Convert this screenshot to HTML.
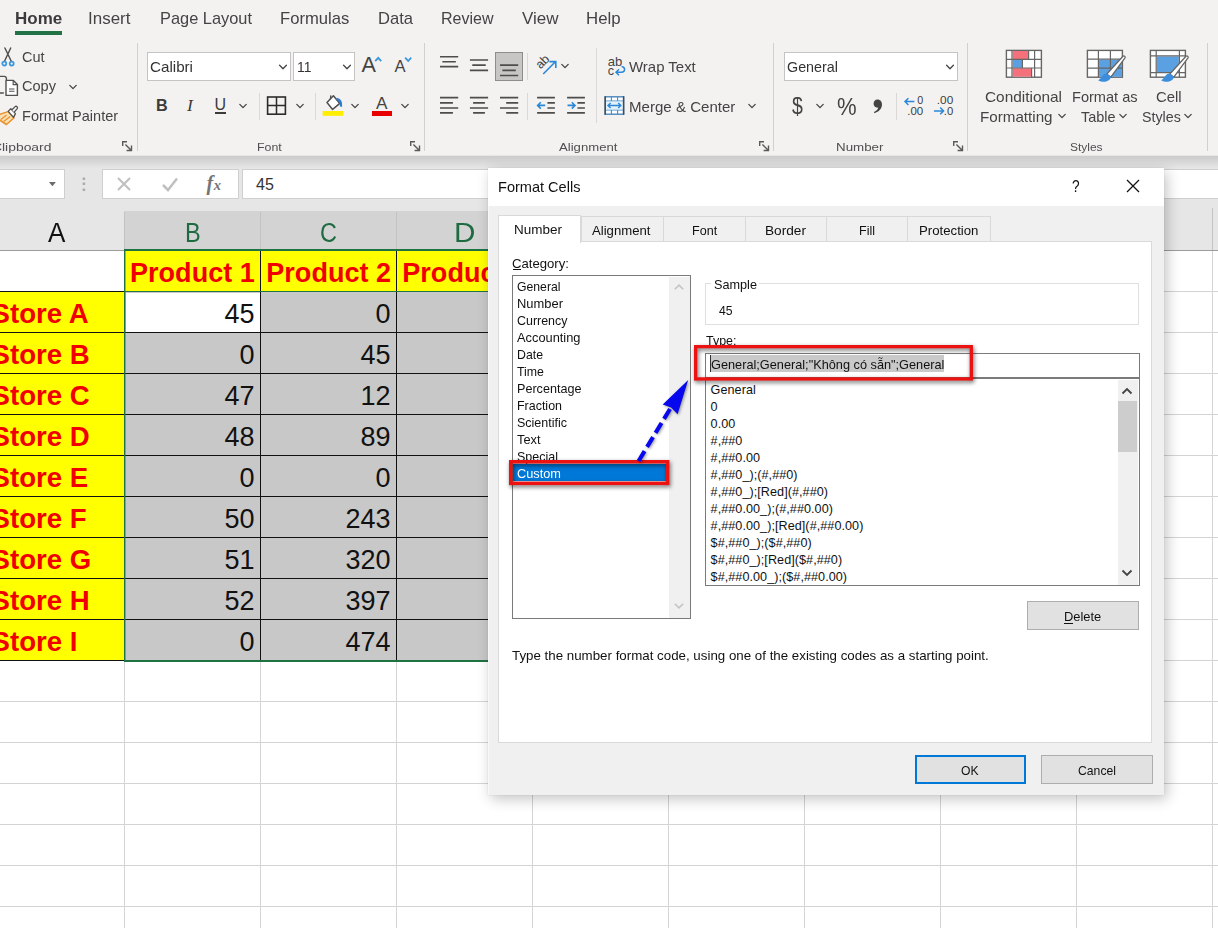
<!DOCTYPE html>
<html lang="en"><head><meta charset="utf-8"><title>Format Cells</title>
<style>
html,body{margin:0;padding:0;}
body{width:1218px;height:928px;overflow:hidden;background:#fff;position:relative;
 font-family:"Liberation Sans",sans-serif;}
#root{position:absolute;left:0;top:0;width:1218px;height:928px;overflow:hidden;background:#fff;}
#root div,#root span,#root svg{position:absolute;box-sizing:border-box;}
.t{white-space:pre;}
</style></head><body><div id="root">
<div style="left:0px;top:0px;width:1218px;height:156px;background:#f3f2f1;"></div>
<span class="t" style="left:14.60px;top:9px;line-height:18px;font-size:16.2px;color:#3b3b3b;transform:scaleX(1.0487);transform-origin:0 0;font-weight:700;">Home</span>
<div style="left:14.5px;top:31px;width:47.5px;height:3.6px;background:#217346;"></div>
<span class="t" style="left:88.30px;top:9px;line-height:18px;font-size:16.2px;color:#444;transform:scaleX(1.0490);transform-origin:0 0;">Insert</span>
<span class="t" style="left:159.80px;top:9px;line-height:18px;font-size:16.2px;color:#444;transform:scaleX(1.0113);transform-origin:0 0;">Page Layout</span>
<span class="t" style="left:280.30px;top:9px;line-height:18px;font-size:16.2px;color:#444;transform:scaleX(1.0265);transform-origin:0 0;">Formulas</span>
<span class="t" style="left:377.60px;top:9px;line-height:18px;font-size:16.2px;color:#444;transform:scaleX(1.0228);transform-origin:0 0;">Data</span>
<span class="t" style="left:441.00px;top:9px;line-height:18px;font-size:16.2px;color:#444;transform:scaleX(0.9903);transform-origin:0 0;">Review</span>
<span class="t" style="left:522.00px;top:9px;line-height:18px;font-size:16.2px;color:#444;transform:scaleX(1.0511);transform-origin:0 0;">View</span>
<span class="t" style="left:586.00px;top:9px;line-height:18px;font-size:16.2px;color:#444;transform:scaleX(1.0385);transform-origin:0 0;">Help</span>
<div style="left:136.5px;top:42.5px;width:1px;height:108px;background:#d2d0ce;"></div>
<div style="left:424.4px;top:42.5px;width:1px;height:108px;background:#d2d0ce;"></div>
<div style="left:773.3px;top:42.5px;width:1px;height:108px;background:#d2d0ce;"></div>
<div style="left:967.4px;top:42.5px;width:1px;height:108px;background:#d2d0ce;"></div>
<div style="left:1206.8px;top:42.5px;width:1px;height:108px;background:#d2d0ce;"></div>
<div style="left:258.7px;top:93px;width:1px;height:27px;background:#dad8d6;"></div>
<div style="left:314.7px;top:93px;width:1px;height:27px;background:#dad8d6;"></div>
<div style="left:527.2px;top:53px;width:1px;height:27px;background:#dad8d6;"></div>
<div style="left:527.2px;top:93px;width:1px;height:27px;background:#dad8d6;"></div>
<div style="left:595.5px;top:48px;width:1px;height:75px;background:#dad8d6;"></div>
<div style="left:896.2px;top:93px;width:1px;height:27px;background:#dad8d6;"></div>
<span class="t" style="left:-7.80px;top:140px;line-height:13px;font-size:11.7px;color:#505050;transform:scaleX(1.1881);transform-origin:0 0;">Clipboard</span>
<span class="t" style="left:257.40px;top:140px;line-height:13px;font-size:11.7px;color:#505050;transform:scaleX(1.0593);transform-origin:0 0;">Font</span>
<span class="t" style="left:559.20px;top:140px;line-height:13px;font-size:11.7px;color:#505050;transform:scaleX(1.1244);transform-origin:0 0;">Alignment</span>
<span class="t" style="left:836.30px;top:140px;line-height:13px;font-size:11.7px;color:#505050;transform:scaleX(1.1415);transform-origin:0 0;">Number</span>
<span class="t" style="left:1070.20px;top:140px;line-height:13px;font-size:11.7px;color:#505050;transform:scaleX(1.0232);transform-origin:0 0;">Styles</span>
<svg style="left:121.8px;top:140.6px;" width="11" height="11" viewBox="0 0 11 11"><path d="M0.7 5 L0.7 0.7 L5 0.7" fill="none" stroke="#5a5a5a" stroke-width="1.4"/><path d="M3.4 3.4 L9.2 9.2 M9.5 4.6 L9.5 9.5 L4.6 9.5" fill="none" stroke="#5a5a5a" stroke-width="1.4"/></svg>
<svg style="left:409.6px;top:140.6px;" width="11" height="11" viewBox="0 0 11 11"><path d="M0.7 5 L0.7 0.7 L5 0.7" fill="none" stroke="#5a5a5a" stroke-width="1.4"/><path d="M3.4 3.4 L9.2 9.2 M9.5 4.6 L9.5 9.5 L4.6 9.5" fill="none" stroke="#5a5a5a" stroke-width="1.4"/></svg>
<svg style="left:758.8px;top:140.6px;" width="11" height="11" viewBox="0 0 11 11"><path d="M0.7 5 L0.7 0.7 L5 0.7" fill="none" stroke="#5a5a5a" stroke-width="1.4"/><path d="M3.4 3.4 L9.2 9.2 M9.5 4.6 L9.5 9.5 L4.6 9.5" fill="none" stroke="#5a5a5a" stroke-width="1.4"/></svg>
<svg style="left:952.8px;top:140.6px;" width="11" height="11" viewBox="0 0 11 11"><path d="M0.7 5 L0.7 0.7 L5 0.7" fill="none" stroke="#5a5a5a" stroke-width="1.4"/><path d="M3.4 3.4 L9.2 9.2 M9.5 4.6 L9.5 9.5 L4.6 9.5" fill="none" stroke="#5a5a5a" stroke-width="1.4"/></svg>
<svg style="left:0px;top:46px;" width="16" height="22" viewBox="0 0 16 22"><path d="M4.9 2 L11.3 15.2 M10.7 2 L4.5 15.2" stroke="#505050" stroke-width="1.45" fill="none" stroke-linecap="round"/><circle cx="4.3" cy="17.6" r="2.0" fill="none" stroke="#3a96dd" stroke-width="1.7"/><circle cx="11.7" cy="17.6" r="2.0" fill="none" stroke="#3a96dd" stroke-width="1.7"/></svg>
<span class="t" style="left:22.20px;top:49px;line-height:16px;font-size:14.1px;color:#444;transform:scaleX(1.0300);transform-origin:0 0;">Cut</span>
<svg style="left:0px;top:74px;" width="20" height="24" viewBox="0 0 20 24"><path d="M-2 2.4 L4.2 2.4 Q6.4 2.4 6.4 4.6 L6.4 6 M-2 19 L3.8 19" fill="none" stroke="#505050" stroke-width="1.4"/><path d="M6 6.4 L13.4 6.4 L17.4 10.4 L17.4 21.4 L6 21.4 Z" fill="#fff" stroke="#505050" stroke-width="1.4" stroke-linejoin="round"/><path d="M13.2 6.6 L13.2 10.6 L17.2 10.6" fill="none" stroke="#505050" stroke-width="1.2"/><path d="M9 15 L14.5 15 M9 17.3 L14.5 17.3" stroke="#505050" stroke-width="1.1"/></svg>
<span class="t" style="left:22.20px;top:78px;line-height:16px;font-size:14.1px;color:#444;transform:scaleX(1.0329);transform-origin:0 0;">Copy</span>
<svg style="left:67.4px;top:80.6px;" width="12" height="12" viewBox="0 0 12 12"><path d="M2.8 4.4 L6 7.6 L9.2 4.4" fill="none" stroke="#444" stroke-width="1.3" stroke-linecap="round" stroke-linejoin="round"/></svg>
<svg style="left:0px;top:104px;" width="22" height="24" viewBox="0 0 22 24"><path d="M-1 10.6 L8 7.6 L13.9 14 L6.4 20.5 L-1 15.6 Z" fill="#fbe0b6" stroke="#e8912d" stroke-width="1.5" stroke-linejoin="round"/><path d="M1 15.4 L6.6 11 M3.6 17.6 L10.2 12.6" stroke="#e8912d" stroke-width="1.3" fill="none"/><path d="M8.2 7.4 L10.8 4.8 L15.4 9.6 L13.6 13.4 Z" fill="#fff" stroke="#505050" stroke-width="1.3" stroke-linejoin="round"/><path d="M12 5.8 L15.2 2.6 C16.4 1.6 18.2 3.2 17.2 4.6 L14.2 8.2" fill="#fff" stroke="#505050" stroke-width="1.3" stroke-linejoin="round"/></svg>
<span class="t" style="left:22.20px;top:108px;line-height:16px;font-size:14.1px;color:#444;transform:scaleX(1.0317);transform-origin:0 0;">Format Painter</span>
<div style="left:147px;top:52px;width:144px;height:29px;background:#fff;border:1px solid #c6c4c2;"></div>
<span class="t" style="left:150.20px;top:59px;line-height:16px;font-size:14.1px;color:#333;transform:scaleX(1.0761);transform-origin:0 0;">Calibri</span>
<svg style="left:277px;top:61.2px;" width="12" height="12" viewBox="0 0 12 12"><path d="M2.6 4.3 L6 7.7 L9.4 4.3" fill="none" stroke="#444" stroke-width="1.3" stroke-linecap="round" stroke-linejoin="round"/></svg>
<div style="left:293px;top:52px;width:62px;height:29px;background:#fff;border:1px solid #c6c4c2;"></div>
<span class="t" style="left:296.80px;top:59px;line-height:16px;font-size:14.1px;color:#333;transform:scaleX(0.9838);transform-origin:0 0;">11</span>
<svg style="left:341px;top:61.2px;" width="12" height="12" viewBox="0 0 12 12"><path d="M2.6 4.3 L6 7.7 L9.4 4.3" fill="none" stroke="#444" stroke-width="1.3" stroke-linecap="round" stroke-linejoin="round"/></svg>
<span class="t" style="left:361.60px;top:52px;line-height:25px;font-size:21.6px;color:#444;">A</span>
<svg style="left:374px;top:56.2px;" width="9" height="7" viewBox="0 0 9 7"><path d="M1.2 5.2 L4.2 1.8 L7.2 5.2" fill="none" stroke="#3a96dd" stroke-width="1.8"/></svg>
<span class="t" style="left:394.40px;top:57px;line-height:19px;font-size:16.6px;color:#444;">A</span>
<svg style="left:404px;top:55.6px;" width="9" height="7" viewBox="0 0 9 7"><path d="M1.2 1.6 L4.2 5 L7.2 1.6" fill="none" stroke="#3a96dd" stroke-width="1.8"/></svg>
<span class="t" style="left:156.00px;top:96px;line-height:18px;font-size:16.2px;color:#3b3b3b;font-weight:700;">B</span>
<span class="t" style="left:187.00px;top:95px;line-height:20px;font-size:17.5px;color:#3b3b3b;font-style:italic;font-family:'Liberation Serif',serif;">I</span>
<span class="t" style="left:214.60px;top:96px;line-height:17px;font-size:16px;color:#3b3b3b;">U</span>
<div style="left:214.8px;top:112px;width:11.6px;height:1.5px;background:#3b3b3b;"></div>
<svg style="left:237.4px;top:100.4px;" width="12" height="12" viewBox="0 0 12 12"><path d="M2.8 4.4 L6 7.6 L9.2 4.4" fill="none" stroke="#444" stroke-width="1.3" stroke-linecap="round" stroke-linejoin="round"/></svg>
<svg style="left:266px;top:95px;" width="22" height="22" viewBox="0 0 22 22"><rect x="1.6" y="2" width="17.8" height="17.2" fill="none" stroke="#2b2b2b" stroke-width="1.6"/><path d="M10.5 2 L10.5 19.2 M1.6 10.6 L19.4 10.6" stroke="#2b2b2b" stroke-width="1.5"/></svg>
<svg style="left:293.6px;top:100px;" width="12" height="12" viewBox="0 0 12 12"><path d="M2.8 4.4 L6 7.6 L9.2 4.4" fill="none" stroke="#444" stroke-width="1.3" stroke-linecap="round" stroke-linejoin="round"/></svg>
<svg style="left:322px;top:94px;" width="24" height="24" viewBox="0 0 24 24"><path d="M5 8.6 L11.4 1.8 L17.8 9.4 L10.6 15.4 Z" fill="#fff" stroke="#505050" stroke-width="1.5" stroke-linejoin="round"/><path d="M8.4 5.2 L8.8 1.4" fill="none" stroke="#505050" stroke-width="1.3"/><path d="M14.6 4.8 C17.6 5.4 19.4 8.4 19 12.6" fill="none" stroke="#2b7cd3" stroke-width="2.3"/><rect x="0.6" y="17" width="20.8" height="4.8" fill="#ffee00"/></svg>
<svg style="left:349.4px;top:100px;" width="12" height="12" viewBox="0 0 12 12"><path d="M2.8 4.4 L6 7.6 L9.2 4.4" fill="none" stroke="#444" stroke-width="1.3" stroke-linecap="round" stroke-linejoin="round"/></svg>
<span class="t" style="left:376.00px;top:93px;line-height:20px;font-size:17.2px;color:#444;">A</span>
<div style="left:372px;top:111px;width:19.8px;height:4.8px;background:#e80000;"></div>
<svg style="left:398.5px;top:100px;" width="12" height="12" viewBox="0 0 12 12"><path d="M2.8 4.4 L6 7.6 L9.2 4.4" fill="none" stroke="#444" stroke-width="1.3" stroke-linecap="round" stroke-linejoin="round"/></svg>
<svg style="left:0;top:0;" width="700" height="130" viewBox="0 0 700 130"><path d="M440.00 56.70 L458.20 56.70 M442.37 61.70 L455.83 61.70 M440.00 66.60 L458.20 66.60 " stroke="#4d4d4d" stroke-width="1.65" fill="none"/></svg>
<svg style="left:0;top:0;" width="700" height="130" viewBox="0 0 700 130"><path d="M469.90 60.00 L488.10 60.00 M472.27 65.10 L485.73 65.10 M469.90 70.30 L488.10 70.30 " stroke="#4d4d4d" stroke-width="1.65" fill="none"/></svg>
<div style="left:495px;top:52px;width:28px;height:29px;background:#c8c6c4;border:1px solid #8f8d8b;"></div>
<svg style="left:0;top:0;" width="700" height="130" viewBox="0 0 700 130"><path d="M500.00 65.10 L518.20 65.10 M502.37 70.30 L515.83 70.30 M500.00 75.50 L518.20 75.50 " stroke="#4d4d4d" stroke-width="1.65" fill="none"/></svg>
<svg style="left:532px;top:50px;" width="30" height="30" viewBox="0 0 30 30"><text x="0" y="0" transform="translate(8.4 19.6) rotate(-45)" font-family="Liberation Sans, sans-serif" font-size="12.5" fill="#444">ab</text><path d="M11.2 24 L23.4 11.8 M17.4 11.6 L23.8 11.6 L23.8 18" fill="none" stroke="#2b88d8" stroke-width="1.6"/></svg>
<svg style="left:559.2px;top:60.400000000000006px;" width="12" height="12" viewBox="0 0 12 12"><path d="M2.8 4.4 L6 7.6 L9.2 4.4" fill="none" stroke="#444" stroke-width="1.3" stroke-linecap="round" stroke-linejoin="round"/></svg>
<svg style="left:0;top:0;" width="700" height="130" viewBox="0 0 700 130"><path d="M440.00 97.60 L458.20 97.60 M440.00 102.80 L452.92 102.80 M440.00 108.00 L458.20 108.00 M440.00 112.90 L452.92 112.90 " stroke="#4d4d4d" stroke-width="1.65" fill="none"/></svg>
<svg style="left:0;top:0;" width="700" height="130" viewBox="0 0 700 130"><path d="M469.90 97.60 L488.10 97.60 M473.08 102.80 L484.91 102.80 M469.90 108.00 L488.10 108.00 M473.08 112.90 L484.91 112.90 " stroke="#4d4d4d" stroke-width="1.65" fill="none"/></svg>
<svg style="left:0;top:0;" width="700" height="130" viewBox="0 0 700 130"><path d="M500.00 97.60 L518.20 97.60 M506.19 102.80 L518.20 102.80 M500.00 108.00 L518.20 108.00 M506.19 112.90 L518.20 112.90 " stroke="#4d4d4d" stroke-width="1.65" fill="none"/></svg>
<svg style="left:0;top:0;" width="700" height="130" viewBox="0 0 700 130"><path d="M537.10 97.60 L554.90 97.60 M537.10 112.90 L554.90 112.90 " stroke="#4d4d4d" stroke-width="1.65" fill="none"/></svg>
<svg style="left:0;top:0;" width="700" height="130" viewBox="0 0 700 130"><path d="M547.42 102.80 L554.90 102.80 M547.42 108.00 L554.90 108.00 " stroke="#4d4d4d" stroke-width="1.65" fill="none"/></svg>
<svg style="left:535.5px;top:100px;" width="12" height="11" viewBox="0 0 12 11"><path d="M9.2 5.4 L1.8 5.4 M4.8 2.2 L1.6 5.4 L4.8 8.6" fill="none" stroke="#2b88d8" stroke-width="1.6"/></svg>
<svg style="left:0;top:0;" width="700" height="130" viewBox="0 0 700 130"><path d="M567.10 97.60 L584.90 97.60 M567.10 112.90 L584.90 112.90 " stroke="#4d4d4d" stroke-width="1.65" fill="none"/></svg>
<svg style="left:0;top:0;" width="700" height="130" viewBox="0 0 700 130"><path d="M577.42 102.80 L584.90 102.80 M577.42 108.00 L584.90 108.00 " stroke="#4d4d4d" stroke-width="1.65" fill="none"/></svg>
<svg style="left:565.6px;top:100px;" width="12" height="11" viewBox="0 0 12 11"><path d="M1.5 5.4 L8.8 5.4 M5.8 2.2 L9 5.4 L5.8 8.6" fill="none" stroke="#2b88d8" stroke-width="1.6"/></svg>
<svg style="left:606px;top:54px;" width="24" height="24" viewBox="0 0 24 24"><text x="1.8" y="11.6" font-family="Liberation Sans, sans-serif" font-size="12.6" fill="#444" textLength="14.6" lengthAdjust="spacingAndGlyphs">ab</text><text x="1.8" y="21.4" font-family="Liberation Sans, sans-serif" font-size="12.6" fill="#444">c</text><path d="M15.6 12.4 C19.6 12.8 19.6 18.2 15.4 18.2 L10.2 18.2 M13 15.2 L10 18.2 L13 21.2" fill="none" stroke="#2b88d8" stroke-width="1.5"/></svg>
<span class="t" style="left:629.40px;top:59px;line-height:16px;font-size:14.1px;color:#444;transform:scaleX(1.0611);transform-origin:0 0;">Wrap Text</span>
<svg style="left:604px;top:95px;" width="22" height="22" viewBox="0 0 22 22"><rect x="1.2" y="1.8" width="18.4" height="17.4" fill="#fff" stroke="#3f7fb8" stroke-width="1.3"/><path d="M1.2 6 L19.6 6 M1.2 15 L19.6 15 M7.4 1.8 L7.4 6 M13.6 1.8 L13.6 6 M7.4 15 L7.4 19.2 M13.6 15 L13.6 19.2" stroke="#3f8fd0" stroke-width="1.1" fill="none"/><rect x="1.9" y="6.6" width="17" height="7.8" fill="#e4f0fa"/><path d="M1.2 1.2 L1.2 19.8 M19.6 1.2 L19.6 19.8" stroke="#4a4a4a" stroke-width="1.5" fill="none"/><path d="M4.2 10.5 L16.6 10.5 M6.6 8 L4 10.5 L6.6 13 M14.2 8 L16.8 10.5 L14.2 13" fill="none" stroke="#2b88d8" stroke-width="1.4"/></svg>
<span class="t" style="left:629.40px;top:99px;line-height:16px;font-size:14.1px;color:#444;transform:scaleX(1.0691);transform-origin:0 0;">Merge &amp; Center</span>
<svg style="left:746.4px;top:100.2px;" width="12" height="12" viewBox="0 0 12 12"><path d="M2.8 4.4 L6 7.6 L9.2 4.4" fill="none" stroke="#444" stroke-width="1.3" stroke-linecap="round" stroke-linejoin="round"/></svg>
<div style="left:784px;top:52px;width:174px;height:29px;background:#fff;border:1px solid #c6c4c2;"></div>
<span class="t" style="left:787.20px;top:59px;line-height:16px;font-size:14.1px;color:#333;transform:scaleX(1.0167);transform-origin:0 0;">General</span>
<svg style="left:944.4px;top:61.2px;" width="12" height="12" viewBox="0 0 12 12"><path d="M2.6 4.3 L6 7.7 L9.4 4.3" fill="none" stroke="#444" stroke-width="1.3" stroke-linecap="round" stroke-linejoin="round"/></svg>
<span class="t" style="left:792.20px;top:92px;line-height:27px;font-size:24px;color:#444;transform:scaleX(0.8091);transform-origin:0 0;">$</span>
<svg style="left:814.3px;top:100.4px;" width="12" height="12" viewBox="0 0 12 12"><path d="M2.8 4.4 L6 7.6 L9.2 4.4" fill="none" stroke="#444" stroke-width="1.3" stroke-linecap="round" stroke-linejoin="round"/></svg>
<span class="t" style="left:836.80px;top:93px;line-height:27px;font-size:24px;color:#444;transform:scaleX(0.9185);transform-origin:0 0;">%</span>
<svg style="left:871px;top:98px;" width="14" height="20" viewBox="0 0 14 20"><path d="M6.4 1.6 C9.4 1.6 11 3.8 11 6.6 C11 10.6 8 14 3.4 15.2 L3 14 C5.6 13 7 11.4 7.2 9.6 C4.6 10 2.6 8.4 2.6 5.8 C2.6 3.4 4.2 1.6 6.4 1.6 Z" fill="#444"/></svg>
<svg style="left:903px;top:94px;" width="24" height="24" viewBox="0 0 24 24"><path d="M11.4 7.6 L2 7.6 M5.4 4.2 L2 7.6 L5.4 11" fill="none" stroke="#2b88d8" stroke-width="1.5"/><text x="14.2" y="10.4" font-family="Liberation Sans, sans-serif" font-size="10.8" fill="#3b3b3b" textLength="6" lengthAdjust="spacingAndGlyphs">0</text><text x="4.2" y="20.7" font-family="Liberation Sans, sans-serif" font-size="10.8" fill="#3b3b3b" textLength="16" lengthAdjust="spacingAndGlyphs">.00</text></svg>
<svg style="left:932px;top:94px;" width="24" height="24" viewBox="0 0 24 24"><text x="4.8" y="10.4" font-family="Liberation Sans, sans-serif" font-size="10.8" fill="#3b3b3b" textLength="16.4" lengthAdjust="spacingAndGlyphs">.00</text><path d="M2 16.9 L11.6 16.9 M8.2 13.5 L11.6 16.9 L8.2 20.3" fill="none" stroke="#2b88d8" stroke-width="1.5"/><text x="11.8" y="20.7" font-family="Liberation Sans, sans-serif" font-size="10.8" fill="#3b3b3b" textLength="9.4" lengthAdjust="spacingAndGlyphs">.0</text></svg>
<svg style="left:1005px;top:49px;" width="38" height="30" viewBox="0 0 38 30"><rect x="1.4" y="1.4" width="35" height="26.8" fill="#fff" stroke="#666" stroke-width="1.4"/><rect x="7.6" y="2" width="15.4" height="8.2" fill="#f4707a"/><rect x="7.6" y="10.6" width="9.4" height="8.2" fill="#5ba0e0"/><rect x="7.6" y="19.2" width="18.6" height="8.4" fill="#f4707a"/><path d="M7 1.4 L7 28.2 M23.6 1.4 L23.6 10.4 M29.6 1.4 L29.6 28.2 M1.4 10.4 L36.4 10.4 M1.4 19 L36.4 19 M17.4 10.4 L17.4 19 M26.6 19 L26.6 28.2" stroke="#666" stroke-width="1.2" fill="none"/></svg>
<span class="t" style="left:985.20px;top:89px;line-height:16px;font-size:14.1px;color:#444;transform:scaleX(1.0914);transform-origin:0 0;">Conditional</span>
<span class="t" style="left:980.20px;top:109px;line-height:16px;font-size:14.1px;color:#444;transform:scaleX(1.0773);transform-origin:0 0;">Formatting</span>
<svg style="left:1055.9px;top:110.2px;" width="12" height="12" viewBox="0 0 12 12"><path d="M2.8 4.4 L6 7.6 L9.2 4.4" fill="none" stroke="#444" stroke-width="1.3" stroke-linecap="round" stroke-linejoin="round"/></svg>
<svg style="left:1086px;top:49px;" width="42" height="36" viewBox="0 0 42 36"><rect x="1.4" y="1.4" width="35" height="26.8" fill="#fff" stroke="#666" stroke-width="1.4"/><rect x="13" y="10.6" width="23" height="17.2" fill="#5ba0e0"/><path d="M12.4 1.4 L12.4 28.2 M24.4 1.4 L24.4 28.2 M1.4 10.2 L36.4 10.2 M1.4 19.2 L36.4 19.2" stroke="#666" stroke-width="1.2" fill="none"/><g transform="translate(11.4 3.6)"><path d="M9.4 21.4 L25.6 3.6 C26.6 2.6 28.4 4 27.6 5.2 L13.4 24.6 Z" fill="#fff" stroke="#666" stroke-width="1.3" stroke-linejoin="round"/><path d="M9.2 21 C5.4 20.6 4.8 25.4 0.8 27.8 C5.6 30.4 12.4 29.4 13.6 24.4 Z" fill="#3b8ede"/></g></svg>
<span class="t" style="left:1072.20px;top:89px;line-height:16px;font-size:14.1px;color:#444;transform:scaleX(1.0337);transform-origin:0 0;">Format as</span>
<span class="t" style="left:1080.60px;top:109px;line-height:16px;font-size:14.1px;color:#444;transform:scaleX(1.0265);transform-origin:0 0;">Table</span>
<svg style="left:1117.2px;top:110.2px;" width="12" height="12" viewBox="0 0 12 12"><path d="M2.8 4.4 L6 7.6 L9.2 4.4" fill="none" stroke="#444" stroke-width="1.3" stroke-linecap="round" stroke-linejoin="round"/></svg>
<svg style="left:1149px;top:49px;" width="42" height="36" viewBox="0 0 42 36"><rect x="1.4" y="1.4" width="35" height="26.8" fill="#fff" stroke="#666" stroke-width="1.4"/><rect x="7.8" y="7.4" width="22" height="15.8" fill="#5ba0e0"/><path d="M7.2 1.4 L7.2 28.2 M30.4 1.4 L30.4 28.2 M1.4 6.8 L36.4 6.8 M1.4 23.6 L36.4 23.6" stroke="#666" stroke-width="1.2" fill="none"/><g transform="translate(11.4 3.6)"><path d="M9.4 21.4 L25.6 3.6 C26.6 2.6 28.4 4 27.6 5.2 L13.4 24.6 Z" fill="#fff" stroke="#666" stroke-width="1.3" stroke-linejoin="round"/><path d="M9.2 21 C5.4 20.6 4.8 25.4 0.8 27.8 C5.6 30.4 12.4 29.4 13.6 24.4 Z" fill="#3b8ede"/></g></svg>
<span class="t" style="left:1155.60px;top:89px;line-height:16px;font-size:14.1px;color:#444;transform:scaleX(1.0539);transform-origin:0 0;">Cell</span>
<span class="t" style="left:1142.20px;top:109px;line-height:16px;font-size:14.1px;color:#444;transform:scaleX(1.0105);transform-origin:0 0;">Styles</span>
<svg style="left:1182px;top:110.2px;" width="12" height="12" viewBox="0 0 12 12"><path d="M2.8 4.4 L6 7.6 L9.2 4.4" fill="none" stroke="#444" stroke-width="1.3" stroke-linecap="round" stroke-linejoin="round"/></svg>
<div style="left:0px;top:155px;width:1218px;height:96px;background:#e6e6e6;"></div>
<div style="left:0px;top:156px;width:1218px;height:12px;background:linear-gradient(#cbcbcb 0,#d4d4d4 35%,#e6e6e6 100%);"></div>
<div style="left:-1px;top:169px;width:66px;height:30px;background:#fff;border:1px solid #cfcfcf;"></div>
<svg style="left:46px;top:181px;" width="12" height="8" viewBox="0 0 12 8"><path d="M2.9 1 L9.9 1 L6.4 5.2 Z" fill="#6b6b6b"/></svg>
<svg style="left:82px;top:177.4px;" width="4" height="4" viewBox="0 0 4 4"><rect x="0.6" y="0.4" width="2.6" height="2.6" rx="0.6" fill="#ababab"/></svg>
<svg style="left:82px;top:182.4px;" width="4" height="4" viewBox="0 0 4 4"><rect x="0.6" y="0.4" width="2.6" height="2.6" rx="0.6" fill="#ababab"/></svg>
<svg style="left:82px;top:187.6px;" width="4" height="4" viewBox="0 0 4 4"><rect x="0.6" y="0.4" width="2.6" height="2.6" rx="0.6" fill="#ababab"/></svg>
<div style="left:102px;top:169px;width:136.5px;height:30px;background:#fff;border:1px solid #cfcfcf;"></div>
<svg style="left:116px;top:176px;" width="16" height="16" viewBox="0 0 16 16"><path d="M2 2 L14 14 M14 2 L2 14" stroke="#c0c0c0" stroke-width="2.1" fill="none"/></svg>
<svg style="left:161px;top:176px;" width="18" height="16" viewBox="0 0 18 16"><path d="M2 9 L7 14 L16 2.5" stroke="#c0c0c0" stroke-width="2.5" fill="none"/></svg>
<span class="t" style="left:206.50px;top:172px;line-height:22px;font-size:20px;color:#757575;font-weight:700;font-style:italic;font-family:'Liberation Serif',serif;">f</span>
<span class="t" style="left:213.80px;top:177px;line-height:16px;font-size:14.5px;color:#757575;font-weight:700;font-style:italic;font-family:'Liberation Serif',serif;">x</span>
<div style="left:242px;top:169px;width:980px;height:30px;background:#fff;border:1px solid #cfcfcf;"></div>
<span class="t" style="left:256.00px;top:176px;line-height:17px;font-size:16px;color:#333;letter-spacing:0.002px;">45</span>
<div style="left:124px;top:211px;width:408px;height:39px;background:#d3d3d3;"></div>
<div style="left:0px;top:250px;width:1218px;height:1px;background:#9c9c9c;"></div>
<div style="left:124px;top:212px;width:1px;height:38px;background:#c3c3c3;"></div>
<div style="left:260px;top:212px;width:1px;height:38px;background:#c3c3c3;"></div>
<div style="left:396px;top:212px;width:1px;height:38px;background:#c3c3c3;"></div>
<div style="left:532px;top:212px;width:1px;height:38px;background:#c3c3c3;"></div>
<div style="left:668px;top:208px;width:1px;height:42px;background:#c3c3c3;"></div>
<div style="left:804px;top:208px;width:1px;height:42px;background:#c3c3c3;"></div>
<div style="left:940px;top:208px;width:1px;height:42px;background:#c3c3c3;"></div>
<div style="left:1076px;top:208px;width:1px;height:42px;background:#c3c3c3;"></div>
<div style="left:1212px;top:208px;width:1px;height:42px;background:#c3c3c3;"></div>
<div style="left:1348px;top:208px;width:1px;height:42px;background:#c3c3c3;"></div>
<span class="t" style="left:48.30px;top:218px;line-height:30px;font-size:27px;color:#111;transform:scaleX(0.9662);transform-origin:0 0;">A</span>
<span class="t" style="left:185.35px;top:218px;line-height:30px;font-size:27px;color:#1e6b41;transform:scaleX(0.8718);transform-origin:0 0;">B</span>
<span class="t" style="left:319.95px;top:218px;line-height:30px;font-size:27px;color:#1e6b41;transform:scaleX(0.8667);transform-origin:0 0;">C</span>
<span class="t" style="left:454.20px;top:218px;line-height:30px;font-size:27px;color:#1e6b41;transform:scaleX(1.0975);transform-origin:0 0;">D</span>
<div style="left:0px;top:291px;width:1218px;height:1px;background:#d4d4d4;"></div>
<div style="left:0px;top:332px;width:1218px;height:1px;background:#d4d4d4;"></div>
<div style="left:0px;top:373px;width:1218px;height:1px;background:#d4d4d4;"></div>
<div style="left:0px;top:414px;width:1218px;height:1px;background:#d4d4d4;"></div>
<div style="left:0px;top:455px;width:1218px;height:1px;background:#d4d4d4;"></div>
<div style="left:0px;top:496px;width:1218px;height:1px;background:#d4d4d4;"></div>
<div style="left:0px;top:537px;width:1218px;height:1px;background:#d4d4d4;"></div>
<div style="left:0px;top:578px;width:1218px;height:1px;background:#d4d4d4;"></div>
<div style="left:0px;top:619px;width:1218px;height:1px;background:#d4d4d4;"></div>
<div style="left:0px;top:660px;width:1218px;height:1px;background:#d4d4d4;"></div>
<div style="left:0px;top:701px;width:1218px;height:1px;background:#d4d4d4;"></div>
<div style="left:0px;top:742px;width:1218px;height:1px;background:#d4d4d4;"></div>
<div style="left:0px;top:783px;width:1218px;height:1px;background:#d4d4d4;"></div>
<div style="left:0px;top:824px;width:1218px;height:1px;background:#d4d4d4;"></div>
<div style="left:0px;top:865px;width:1218px;height:1px;background:#d4d4d4;"></div>
<div style="left:0px;top:906px;width:1218px;height:1px;background:#d4d4d4;"></div>
<div style="left:0px;top:947px;width:1218px;height:1px;background:#d4d4d4;"></div>
<div style="left:124px;top:251px;width:1px;height:700px;background:#d4d4d4;"></div>
<div style="left:260px;top:251px;width:1px;height:700px;background:#d4d4d4;"></div>
<div style="left:396px;top:251px;width:1px;height:700px;background:#d4d4d4;"></div>
<div style="left:532px;top:251px;width:1px;height:700px;background:#d4d4d4;"></div>
<div style="left:668px;top:251px;width:1px;height:700px;background:#d4d4d4;"></div>
<div style="left:804px;top:251px;width:1px;height:700px;background:#d4d4d4;"></div>
<div style="left:940px;top:251px;width:1px;height:700px;background:#d4d4d4;"></div>
<div style="left:1076px;top:251px;width:1px;height:700px;background:#d4d4d4;"></div>
<div style="left:1212px;top:251px;width:1px;height:700px;background:#d4d4d4;"></div>
<div style="left:1348px;top:251px;width:1px;height:700px;background:#d4d4d4;"></div>
<div style="left:124px;top:251px;width:408px;height:41px;background:#ffff00;"></div>
<div style="left:0px;top:291px;width:124px;height:370px;background:#ffff00;"></div>
<div style="left:124px;top:292px;width:408px;height:369px;background:#c8c8c8;"></div>
<div style="left:126px;top:293px;width:134px;height:39px;background:#fff;"></div>
<div style="left:0px;top:291px;width:532px;height:1px;background:#111;"></div>
<div style="left:0px;top:332px;width:532px;height:1px;background:#111;"></div>
<div style="left:0px;top:373px;width:532px;height:1px;background:#111;"></div>
<div style="left:0px;top:414px;width:532px;height:1px;background:#111;"></div>
<div style="left:0px;top:455px;width:532px;height:1px;background:#111;"></div>
<div style="left:0px;top:496px;width:532px;height:1px;background:#111;"></div>
<div style="left:0px;top:537px;width:532px;height:1px;background:#111;"></div>
<div style="left:0px;top:578px;width:532px;height:1px;background:#111;"></div>
<div style="left:0px;top:619px;width:532px;height:1px;background:#111;"></div>
<div style="left:0px;top:660px;width:532px;height:1px;background:#111;"></div>
<div style="left:0px;top:660px;width:124px;height:1px;background:#111;"></div>
<div style="left:124px;top:250px;width:1px;height:411px;background:#111;"></div>
<div style="left:260px;top:250px;width:1px;height:411px;background:#111;"></div>
<div style="left:396px;top:250px;width:1px;height:411px;background:#111;"></div>
<div style="left:124px;top:249px;width:408px;height:2px;background:#1f7244;"></div>
<div style="left:124px;top:250px;width:1px;height:412px;background:#1f7244;"></div>
<div style="left:125px;top:250px;width:1px;height:412px;background:rgba(31,114,68,0.45);"></div>
<div style="left:124px;top:660px;width:408px;height:2px;background:#1f7244;"></div>
<div style="left:124px;top:290.5px;width:408px;height:1.5px;background:#1f7244;"></div>
<span class="t" style="left:130.00px;top:258px;line-height:30px;font-size:27px;color:#f00000;letter-spacing:0.031px;font-weight:700;">Product 1</span>
<span class="t" style="left:266.30px;top:258px;line-height:30px;font-size:27px;color:#f00000;letter-spacing:0.031px;font-weight:700;">Product 2</span>
<span class="t" style="left:402.30px;top:258px;line-height:30px;font-size:27px;color:#f00000;letter-spacing:0.031px;font-weight:700;">Product 3</span>
<span class="t" style="left:-8.40px;top:298px;line-height:31px;font-size:27.6px;color:#f00000;font-weight:700;">Store A</span>
<span class="t" style="left:-8.40px;top:339px;line-height:31px;font-size:27.6px;color:#f00000;font-weight:700;">Store B</span>
<span class="t" style="left:-8.40px;top:380px;line-height:31px;font-size:27.6px;color:#f00000;font-weight:700;">Store C</span>
<span class="t" style="left:-8.40px;top:421px;line-height:31px;font-size:27.6px;color:#f00000;font-weight:700;">Store D</span>
<span class="t" style="left:-8.40px;top:462px;line-height:31px;font-size:27.6px;color:#f00000;font-weight:700;">Store E</span>
<span class="t" style="left:-8.40px;top:503px;line-height:31px;font-size:27.6px;color:#f00000;font-weight:700;">Store F</span>
<span class="t" style="left:-8.40px;top:544px;line-height:31px;font-size:27.6px;color:#f00000;font-weight:700;">Store G</span>
<span class="t" style="left:-8.40px;top:585px;line-height:31px;font-size:27.6px;color:#f00000;font-weight:700;">Store H</span>
<span class="t" style="left:-8.40px;top:626px;line-height:31px;font-size:27.6px;color:#f00000;font-weight:700;">Store I</span>
<span class="t" style="left:224.57px;top:299px;line-height:30px;font-size:27px;color:#111;">45</span>
<span class="t" style="left:375.58px;top:299px;line-height:30px;font-size:27px;color:#111;">0</span>
<span class="t" style="left:239.58px;top:340px;line-height:30px;font-size:27px;color:#111;">0</span>
<span class="t" style="left:360.57px;top:340px;line-height:30px;font-size:27px;color:#111;">45</span>
<span class="t" style="left:224.57px;top:381px;line-height:30px;font-size:27px;color:#111;">47</span>
<span class="t" style="left:360.57px;top:381px;line-height:30px;font-size:27px;color:#111;">12</span>
<span class="t" style="left:224.57px;top:422px;line-height:30px;font-size:27px;color:#111;">48</span>
<span class="t" style="left:360.57px;top:422px;line-height:30px;font-size:27px;color:#111;">89</span>
<span class="t" style="left:239.58px;top:463px;line-height:30px;font-size:27px;color:#111;">0</span>
<span class="t" style="left:375.58px;top:463px;line-height:30px;font-size:27px;color:#111;">0</span>
<span class="t" style="left:224.57px;top:504px;line-height:30px;font-size:27px;color:#111;">50</span>
<span class="t" style="left:345.55px;top:504px;line-height:30px;font-size:27px;color:#111;">243</span>
<span class="t" style="left:224.57px;top:545px;line-height:30px;font-size:27px;color:#111;">51</span>
<span class="t" style="left:345.55px;top:545px;line-height:30px;font-size:27px;color:#111;">320</span>
<span class="t" style="left:224.57px;top:586px;line-height:30px;font-size:27px;color:#111;">52</span>
<span class="t" style="left:345.55px;top:586px;line-height:30px;font-size:27px;color:#111;">397</span>
<span class="t" style="left:239.58px;top:627px;line-height:30px;font-size:27px;color:#111;">0</span>
<span class="t" style="left:345.55px;top:627px;line-height:30px;font-size:27px;color:#111;">474</span>
<div style="left:488px;top:168px;width:676px;height:627px;background:#f0f0f0;box-shadow:3px 4px 13px rgba(0,0,0,0.23),0 0 1px rgba(0,0,0,0.15);border-left:1px solid #f8f8f8;"></div>
<div style="left:488px;top:168px;width:676px;height:37.5px;background:#fff;"></div>
<span class="t" style="left:498.30px;top:179px;line-height:16px;font-size:14.2px;color:#111;transform:scaleX(1.0251);transform-origin:0 0;">Format Cells</span>
<span class="t" style="left:1072.20px;top:177px;line-height:19px;font-size:17px;color:#111;transform:scaleX(0.8038);transform-origin:0 0;">?</span>
<svg style="left:1126px;top:179px;" width="14" height="14" viewBox="0 0 14 14"><path d="M1 1 L13 13 M13 1 L1 13" stroke="#111" stroke-width="1.25" fill="none"/></svg>
<div style="left:498px;top:241px;width:654px;height:501.5px;background:#fff;border:1px solid #d9d9d9;"></div>
<div style="left:580.5px;top:216px;width:83.20000000000005px;height:25px;background:#f0f0f0;border:1px solid #d9d9d9;border-bottom:none;"></div>
<div style="left:662.7px;top:216px;width:83.0px;height:25px;background:#f0f0f0;border:1px solid #d9d9d9;border-bottom:none;"></div>
<div style="left:744.7px;top:216px;width:82.0px;height:25px;background:#f0f0f0;border:1px solid #d9d9d9;border-bottom:none;"></div>
<div style="left:825.7px;top:216px;width:81.89999999999998px;height:25px;background:#f0f0f0;border:1px solid #d9d9d9;border-bottom:none;"></div>
<div style="left:906.6px;top:216px;width:84.79999999999995px;height:25px;background:#f0f0f0;border:1px solid #d9d9d9;border-bottom:none;"></div>
<div style="left:498px;top:215px;width:83px;height:27.5px;background:#fff;border:1px solid #d9d9d9;border-bottom:none;"></div>
<span class="t" style="left:514.20px;top:223px;line-height:14px;font-size:12.6px;color:#111;transform:scaleX(1.0711);transform-origin:0 0;">Number</span>
<span class="t" style="left:592.30px;top:224px;line-height:14px;font-size:12.6px;color:#111;transform:scaleX(1.0441);transform-origin:0 0;">Alignment</span>
<span class="t" style="left:692.30px;top:224px;line-height:14px;font-size:12.6px;color:#111;transform:scaleX(0.9995);transform-origin:0 0;">Font</span>
<span class="t" style="left:764.80px;top:224px;line-height:14px;font-size:12.6px;color:#111;transform:scaleX(1.0841);transform-origin:0 0;">Border</span>
<span class="t" style="left:858.80px;top:224px;line-height:14px;font-size:12.6px;color:#111;transform:scaleX(0.9941);transform-origin:0 0;">Fill</span>
<span class="t" style="left:919.30px;top:224px;line-height:14px;font-size:12.6px;color:#111;transform:scaleX(1.0488);transform-origin:0 0;">Protection</span>
<span class="t" style="left:512.30px;top:257px;line-height:14px;font-size:12.6px;color:#111;transform:scaleX(1.0434);transform-origin:0 0;">Category:</span>
<div style="left:512.6px;top:269px;width:8.2px;height:1px;background:#111;"></div>
<div style="left:512px;top:275px;width:179px;height:343.5px;background:#fff;border:1px solid #7a7a7a;"></div>
<div style="left:669px;top:277px;width:21px;height:340.5px;background:#f0f0f0;"></div>
<svg style="left:672.8px;top:280.6px;" width="12" height="12" viewBox="0 0 12 12"><path d="M1.8 8.3 L6 4.2 L10.2 8.3" fill="none" stroke="#c4c4c4" stroke-width="1.6"/></svg>
<svg style="left:672.8px;top:600px;" width="12" height="12" viewBox="0 0 12 12"><path d="M1.8 3.7 L6 7.8 L10.2 3.7" fill="none" stroke="#c4c4c4" stroke-width="1.6"/></svg>
<span class="t" style="left:517.30px;top:280px;line-height:14px;font-size:12.6px;color:#111;transform:scaleX(0.9704);transform-origin:0 0;">General</span>
<span class="t" style="left:517.30px;top:297px;line-height:14px;font-size:12.6px;color:#111;transform:scaleX(1.0265);transform-origin:0 0;">Number</span>
<span class="t" style="left:517.30px;top:314px;line-height:14px;font-size:12.6px;color:#111;transform:scaleX(0.9880);transform-origin:0 0;">Currency</span>
<span class="t" style="left:517.30px;top:331px;line-height:14px;font-size:12.6px;color:#111;transform:scaleX(1.0186);transform-origin:0 0;">Accounting</span>
<span class="t" style="left:517.30px;top:348px;line-height:14px;font-size:12.6px;color:#111;transform:scaleX(0.9769);transform-origin:0 0;">Date</span>
<span class="t" style="left:517.30px;top:365px;line-height:14px;font-size:12.6px;color:#111;transform:scaleX(0.9807);transform-origin:0 0;">Time</span>
<span class="t" style="left:517.30px;top:382px;line-height:14px;font-size:12.6px;color:#111;transform:scaleX(1.0008);transform-origin:0 0;">Percentage</span>
<span class="t" style="left:517.30px;top:399px;line-height:14px;font-size:12.6px;color:#111;transform:scaleX(0.9887);transform-origin:0 0;">Fraction</span>
<span class="t" style="left:517.30px;top:416px;line-height:14px;font-size:12.6px;color:#111;transform:scaleX(0.9917);transform-origin:0 0;">Scientific</span>
<span class="t" style="left:517.30px;top:433px;line-height:14px;font-size:12.6px;color:#111;transform:scaleX(1.0169);transform-origin:0 0;">Text</span>
<span class="t" style="left:517.30px;top:450px;line-height:14px;font-size:12.6px;color:#111;transform:scaleX(0.9921);transform-origin:0 0;">Special</span>
<div style="left:513px;top:463.5px;width:154px;height:17.8px;background:#0078d7;"></div>
<span class="t" style="left:517.30px;top:467px;line-height:14px;font-size:12.6px;color:#fff;transform:scaleX(1.0136);transform-origin:0 0;">Custom</span>
<div style="left:705px;top:283px;width:433.5px;height:41.5px;border:1px solid #dfdfdf;"></div>
<div style="left:711px;top:280px;width:48px;height:8px;background:#fff;"></div>
<span class="t" style="left:714.20px;top:278px;line-height:14px;font-size:12.6px;color:#111;transform:scaleX(1.0065);transform-origin:0 0;">Sample</span>
<span class="t" style="left:719.20px;top:304px;line-height:14px;font-size:12.6px;color:#111;transform:scaleX(0.9704);transform-origin:0 0;">45</span>
<span class="t" style="left:706.20px;top:334px;line-height:14px;font-size:12.6px;color:#111;transform:scaleX(0.9897);transform-origin:0 0;">Type:</span>
<div style="left:706.3px;top:347px;width:7.6px;height:1px;background:#111;"></div>
<div style="left:705px;top:352.5px;width:434.5px;height:25px;background:#fff;border:1px solid #7a7a7a;"></div>
<div style="left:710.4px;top:354.5px;width:233.4px;height:17.7px;background:#c9c9c9;"></div>
<div style="left:710px;top:354.5px;width:1px;height:17.7px;background:#333;"></div>
<span class="t" style="left:710.80px;top:358px;line-height:14px;font-size:12.6px;color:#111;transform:scaleX(1.0109);transform-origin:0 0;">General;General;&quot;Không có sẵn&quot;;General</span>
<div style="left:705px;top:377.5px;width:434.5px;height:208.5px;background:#fff;border:1px solid #7a7a7a;"></div>
<div style="left:1118px;top:380px;width:20px;height:205px;background:#f0f0f0;"></div>
<div style="left:1118px;top:401px;width:19px;height:50.5px;background:#cdcdcd;"></div>
<svg style="left:1121.4px;top:384.6px;" width="12" height="12" viewBox="0 0 12 12"><path d="M1.5 8.5 L6 4 L10.5 8.5" fill="none" stroke="#444" stroke-width="1.8"/></svg>
<svg style="left:1121.4px;top:566.5px;" width="12" height="12" viewBox="0 0 12 12"><path d="M1.5 3.5 L6 8 L10.5 3.5" fill="none" stroke="#444" stroke-width="1.8"/></svg>
<span class="t" style="left:710.60px;top:383px;line-height:14px;font-size:12.6px;color:#111;letter-spacing:0.06px;">General</span>
<span class="t" style="left:710.60px;top:400px;line-height:14px;font-size:12.6px;color:#111;letter-spacing:0.06px;">0</span>
<span class="t" style="left:710.60px;top:417px;line-height:14px;font-size:12.6px;color:#111;letter-spacing:0.06px;">0.00</span>
<span class="t" style="left:710.60px;top:434px;line-height:14px;font-size:12.6px;color:#111;letter-spacing:0.06px;">#,##0</span>
<span class="t" style="left:710.60px;top:451px;line-height:14px;font-size:12.6px;color:#111;letter-spacing:0.06px;">#,##0.00</span>
<span class="t" style="left:710.60px;top:468px;line-height:14px;font-size:12.6px;color:#111;letter-spacing:0.06px;">#,##0_);(#,##0)</span>
<span class="t" style="left:710.60px;top:485px;line-height:14px;font-size:12.6px;color:#111;letter-spacing:0.06px;">#,##0_);[Red](#,##0)</span>
<span class="t" style="left:710.60px;top:502px;line-height:14px;font-size:12.6px;color:#111;letter-spacing:0.06px;">#,##0.00_);(#,##0.00)</span>
<span class="t" style="left:710.60px;top:519px;line-height:14px;font-size:12.6px;color:#111;letter-spacing:0.06px;">#,##0.00_);[Red](#,##0.00)</span>
<span class="t" style="left:710.60px;top:536px;line-height:14px;font-size:12.6px;color:#111;letter-spacing:0.06px;">$#,##0_);($#,##0)</span>
<span class="t" style="left:710.60px;top:553px;line-height:14px;font-size:12.6px;color:#111;letter-spacing:0.06px;">$#,##0_);[Red]($#,##0)</span>
<span class="t" style="left:710.60px;top:570px;line-height:14px;font-size:12.6px;color:#111;letter-spacing:0.06px;">$#,##0.00_);($#,##0.00)</span>
<div style="left:1027px;top:601px;width:112px;height:28.5px;background:#e1e1e1;border:1px solid #adadad;"></div>
<span class="t" style="left:1064.20px;top:610px;line-height:14px;font-size:12.6px;color:#111;transform:scaleX(1.0241);transform-origin:0 0;">Delete</span>
<div style="left:1064.4px;top:623.2px;width:8.6px;height:1px;background:#111;"></div>
<span class="t" style="left:512.40px;top:649px;line-height:14px;font-size:12.6px;color:#111;transform:scaleX(1.0575);transform-origin:0 0;">Type the number format code, using one of the existing codes as a starting point.</span>
<div style="left:914.5px;top:755px;width:111.5px;height:29px;background:#e1e1e1;border:2px solid #0078d7;"></div>
<span class="t" style="left:961.30px;top:764px;line-height:14px;font-size:12.6px;color:#111;transform:scaleX(0.9668);transform-origin:0 0;">OK</span>
<div style="left:1041px;top:755px;width:112px;height:29px;background:#e1e1e1;border:1px solid #adadad;"></div>
<span class="t" style="left:1078.20px;top:764px;line-height:14px;font-size:12.6px;color:#111;transform:scaleX(0.9689);transform-origin:0 0;">Cancel</span>
<svg style="left:501px;top:452px;overflow:visible;" width="176.39999999999998" height="41.10000000000002" viewBox="0 0 176.39999999999998 41.10000000000002"><rect x="9.75" y="9.75" width="156.90" height="21.60" fill="none" stroke="#ec1212" stroke-width="3.5" style="filter:drop-shadow(1.8px 2.2px 2.2px rgba(0,0,0,0.6))"/></svg>
<svg style="left:686px;top:337px;overflow:visible;" width="295" height="51.60000000000002" viewBox="0 0 295 51.60000000000002"><rect x="9.65" y="9.65" width="275.70" height="32.30" fill="none" stroke="#ec1212" stroke-width="3.3" style="filter:drop-shadow(1.8px 2.2px 2.2px rgba(0,0,0,0.6))"/></svg>
<svg style="left:620px;top:360px;" width="100" height="120" viewBox="0 0 100 120"><g style="filter:drop-shadow(1.5px 1.5px 1.5px rgba(0,0,0,0.4))"><path d="M50 49 L17.5 102.8" stroke="#0808ee" stroke-width="4.1" stroke-dasharray="11.5 4.9" fill="none"/><path d="M68.2 20 L42.7 44.6 L51.1 47.6 L57.6 54.3 Z" fill="#0808ee"/></g></svg>
</div></body></html>
